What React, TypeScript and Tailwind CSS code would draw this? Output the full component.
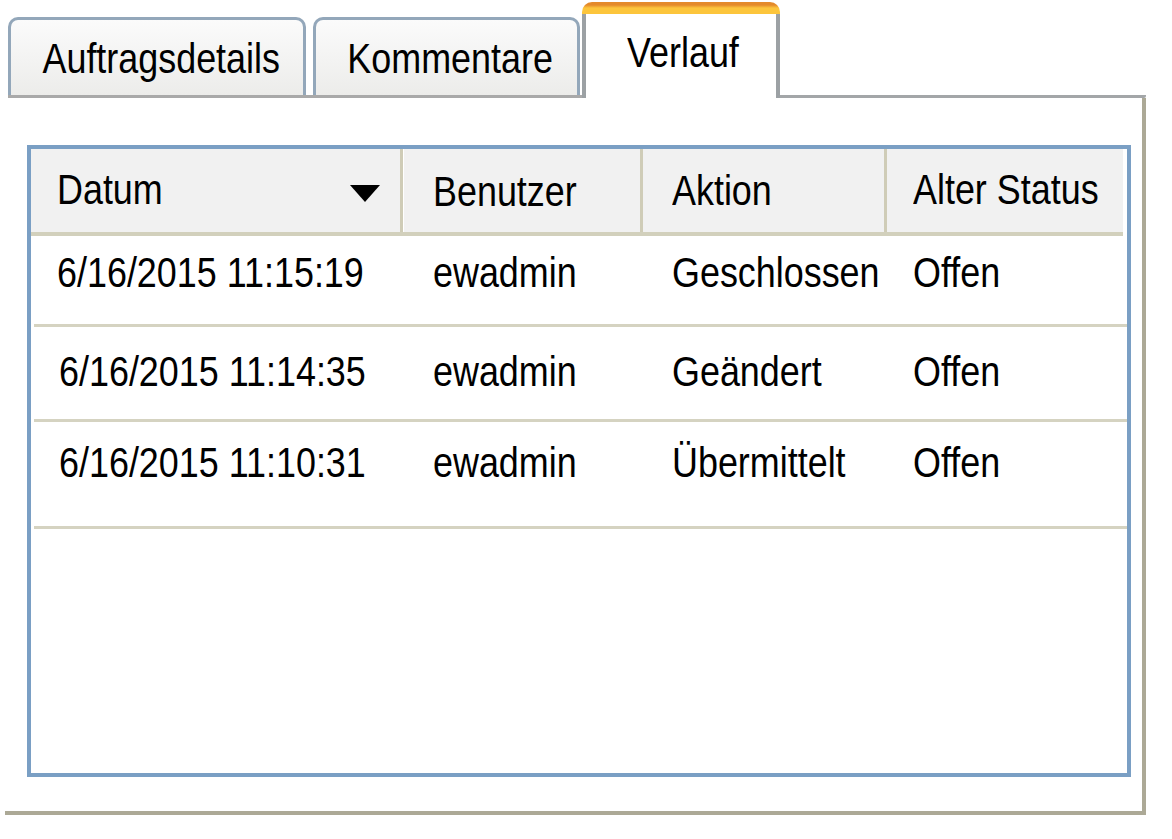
const rows = [
  { date: "6/16/2015 11:15:19", user: "ewadmin", action: "Geschlossen", status: "Offen", h: "h-[91px]", pt: "pt-[15px]", dl: "pl-[23px]" },
  { date: "6/16/2015 11:14:35", user: "ewadmin", action: "Geändert", status: "Offen", h: "h-[95px]", pt: "pt-[23px]", dl: "pl-[25px]" },
  { date: "6/16/2015 11:10:31", user: "ewadmin", action: "Übermittelt", status: "Offen", h: "h-[107px]", pt: "pt-[19px]", dl: "pl-[25px]" },
]

// narrow face isn't installed, so squeeze the sans horizontally
function T({ children, center }: { children: string; center?: boolean }) {
  return (
    <span className={`inline-block whitespace-nowrap scale-x-[0.835] ${center ? "origin-center" : "origin-left"}`}>
      {children}
    </span>
  )
}

function Tab({ label, width }: { label: string; width: string }) {
  return (
    <div className={`${width} h-[78px] rounded-t-[10px] border-[3px] border-b-0 border-[#93a7ba] bg-[linear-gradient(#fbfbfb,#ececea)] flex justify-center pt-[17px] pl-[8px]`}>
      <T center>{label}</T>
    </div>
  )
}

export default function App() {
  return (
    <div className="w-[1172px] h-[839px] bg-white text-black text-[43px] leading-[43px] font-['Liberation_Sans',Arial,sans-serif]">
      <div className="flex items-end h-[98px] pt-[2px]">
        <div className="ml-[8px] flex gap-[7px] border-b-[3px] border-[#a9a9a9] pr-[2px]">
          <Tab label="Auftragsdetails" width="w-[298px]" />
          <Tab label="Kommentare" width="w-[267px]" />
        </div>
        <div className="w-[198px] h-[96px] flex flex-col">
          <div className="h-[12px] rounded-t-[10px] bg-[linear-gradient(#e48a2b_0,#e48a2b_3px,#fcc53c_6px)]" />
          <div className="flex-1 border-x-[4px] border-[#9ca1a4] bg-white flex justify-center pt-[17px] pl-[4px]">
            <T center>Verlauf</T>
          </div>
        </div>
        <div className="w-[366px] border-b-[3px] border-[#a3a6a8] rounded-br-[2px]" />
      </div>

      <div className="ml-[5px] w-[1141px] h-[717px] border-r-[4px] border-b-[4px] border-[#aca996] pt-[47px] pl-[22px]">
        <div className="w-[1104px] h-[632px] border-[4px] border-[#7a9fc4] bg-white">
          <div className="flex h-[87px] w-[1092px] border-b-[4px] border-[#d2d0bc] bg-[#f1f1f1]">
            <div className="w-[372px] border-r-[3px] border-[#cfccb7] flex items-center justify-between pl-[26px] pr-[20px] pb-[3px]">
              <T>Datum</T>
              <svg width="30" height="17" viewBox="0 0 30 17" className="mt-[8px]">
                <polygon points="0,0 30,0 15,17" fill="#000" />
              </svg>
            </div>
            <div className="w-[240px] border-r-[3px] border-[#cfccb7] border-l border-l-white flex items-center pl-[29px] pt-[2px]">
              <T>Benutzer</T>
            </div>
            <div className="w-[244px] border-r-[3px] border-[#cfccb7] flex items-center pl-[29px]">
              <T>Aktion</T>
            </div>
            <div className="w-[236px] flex items-center pl-[26px] pb-[2px]">
              <T>Alter Status</T>
            </div>
          </div>

          {rows.map((r, i) => (
            <div key={i} className={`flex ${r.h} ${r.pt} ml-[3px] border-b-[3px] border-[#d5d3c1]`}>
              <div className={`w-[369px] ${r.dl}`}><T>{r.date}</T></div>
              <div className="w-[240px] pl-[30px]"><T>{r.user}</T></div>
              <div className="w-[244px] pl-[29px]"><T>{r.action}</T></div>
              <div className="w-[236px] pl-[26px]"><T>{r.status}</T></div>
            </div>
          ))}
        </div>
      </div>
    </div>
  )
}
